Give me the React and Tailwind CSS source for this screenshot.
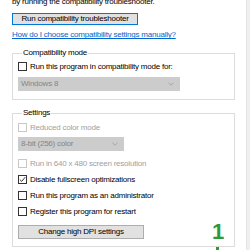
import React from "react";

function Box({ checked, disabled }) {
  return (
    <div
      className={
        "w-[9px] h-[9px] shrink-0 border bg-white flex items-center justify-center " +
        (disabled ? "border-[#c8c8c8]" : "border-[#333333]")
      }
    >
      {checked && (
        <svg width="7" height="7" viewBox="0 0 7 7">
          <path d="M0.8 3.6 L2.7 5.4 L6.2 1.2" fill="none" stroke="#222" strokeWidth="0.9" />
        </svg>
      )}
    </div>
  );
}

function Row({ checked, disabled, children, className = "" }) {
  return (
    <div className={"flex items-center h-[9px] " + className}>
      <Box checked={checked} disabled={disabled} />
      <span
        className={
          "ml-[3px] leading-[9px] whitespace-nowrap " +
          (disabled ? "text-[#a0a0a0]" : "text-[#000]")
        }
      >
        {children}
      </span>
    </div>
  );
}

function Select({ label, width, className = "" }) {
  return (
    <div
      className={
        "h-[14px] bg-[#cccccc] flex items-center justify-between pl-[3px] pr-[6px] " +
        width +
        " " +
        className
      }
    >
      <span className="text-[#858585] leading-[10px]">{label}</span>
      <svg width="6" height="4" viewBox="0 0 6 4">
        <path d="M0.5 0.8 L3 3.2 L5.5 0.8" fill="none" stroke="#9a9a9a" strokeWidth="0.8" />
      </svg>
    </div>
  );
}

export default function App() {
  return (
    <div
      className="w-[250px] h-[250px] bg-white overflow-hidden flex text-[8px] tracking-[-0.22px]"
      style={{ fontFamily: '"Liberation Sans", Arial, sans-serif' }}
    >
      <div className="w-[246px] pl-[12px] flex flex-col">
        <div className="mt-[-3px] h-[10px] leading-[10px] text-black whitespace-nowrap">
          by running the compatibility troubleshooter.
        </div>
        <div className="mt-[6px] w-[126px] h-[14px] border border-[#0078d7] bg-[#e1e1e1] flex items-center justify-center text-black leading-[10px] whitespace-nowrap">
          Run compatibility troubleshooter
        </div>
        <div className="mt-[5px] h-[10px] leading-[10px] text-[#0066cc] underline whitespace-nowrap">
          How do I choose compatibility settings manually?
        </div>

        <fieldset className="mt-[8px] w-[223px] border border-[#dcdcdc] pl-[5px] pb-[8px]">
          <legend className="ml-[4px] px-[1px] h-[10px] leading-[10px] text-black whitespace-nowrap">
            Compatibility mode
          </legend>
          <Row className="mt-[4px]">Run this program in compatibility mode for:</Row>
          <Select label="Windows 8" width="w-[162px]" className="mt-[6px]" />
        </fieldset>

        <fieldset className="mt-[8px] w-[223px] border border-[#dcdcdc] pl-[5px] pb-[6px]">
          <legend className="ml-[4px] px-[1px] h-[10px] leading-[10px] text-black whitespace-nowrap">
            Settings
          </legend>
          <Row disabled className="mt-[5px]">Reduced color mode</Row>
          <Select label="8-bit (256) color" width="w-[106px]" className="mt-[5px]" />
          <Row disabled className="mt-[8px]">Run in 640 x 480 screen resolution</Row>
          <Row checked className="mt-[7px]">Disable fullscreen optimizations</Row>
          <Row className="mt-[7px]">Run this program as an administrator</Row>
          <Row className="mt-[7px]">Register this program for restart</Row>
          <div className="mt-[8px] flex items-center">
            <div className="w-[126px] h-[14px] border border-[#adadad] bg-[#e1e1e1] flex items-center justify-center text-black leading-[10px] whitespace-nowrap">
              Change high DPI settings
            </div>
            <span className="ml-[68px] text-[22px] font-bold leading-[16px] tracking-normal text-[#2f9a35]">1</span>
          </div>
        </fieldset>
        <div className="ml-[204px] w-[3px] h-[3px] bg-[#2f9a35]" />
      </div>
      <div className="w-[4px] h-full bg-[#efefef] border-l border-[#e4e4e4]" />
    </div>
  );
}
